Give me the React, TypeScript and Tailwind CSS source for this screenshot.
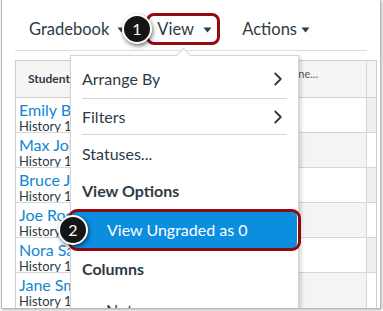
import React from 'react';
import { ChevronRight } from 'lucide-react';

const students = [
    { name: 'Emily Boyd', section: 'History 101' },
    { name: 'Max Johnson', section: 'History 101' },
    { name: 'Bruce Jones', section: 'History 101' },
    { name: 'Joe Rogers', section: 'History 101' },
    { name: 'Nora Santos', section: 'History 101' },
    { name: 'Jane Smith', section: 'History 101' },
];

const Caret = () => (
    <svg width="9" height="6" viewBox="0 0 9 6" className="inline-block">
        <path d="M0.5 0.5 L8.5 0.5 L4.5 5.5 Z" fill="#2d3b45" />
    </svg>
);

const Badge = ({ n, className }: { n: string; className: string }) => (
    <div
        className={`absolute w-[30px] h-[30px] rounded-full bg-[#151515] border-2 border-white shadow-[1px_2px_4px_rgba(0,0,0,0.55)] flex items-center justify-center text-white text-[16px] leading-none z-30 ${className}`}
    >
        {n}
    </div>
);

const App: React.FC = () => {
    return (
        <div className="w-[383px] h-[311px] bg-white font-['Lato','Liberation_Sans',sans-serif] text-[#2d3b45]">
            <div className="relative ml-px w-[380px] h-[309px] overflow-hidden bg-white border-x border-b border-[#b8b8b8] shadow-[1px_1px_3px_rgba(0,0,0,0.3)]">
                {/* top bar */}
                <div className="mx-[13px] h-[51px] pt-[8px] border-b border-[#dcdcdc] flex items-center pl-[14px] text-[16.5px]">
                    <span>Gradebook</span>
                    <span className="ml-[8px] mt-[1px] flex"><Caret /></span>
                    <div className="ml-[20px] h-[32px] w-[74px] border-[3px] border-[#960b0f] rounded-[8px] flex items-center pl-[8px]">
                        <span>View</span>
                        <span className="ml-[9px] mt-[1px] flex"><Caret /></span>
                    </div>
                    <span className="ml-[22px]">Actions</span>
                    <span className="ml-[4px] mt-[1px] flex"><Caret /></span>
                </div>
                <Badge n="1" className="left-[120px] top-[14px]" />

                {/* gradebook grid */}
                <div className="ml-[13px] mt-[9px] w-[362px] border border-[#cfcfcf]">
                    <div className="flex h-[37px] bg-[#f5f5f5] border-b border-[#cfcfcf]">
                        <div className="w-[185px] border-r border-[#d6d6d6] flex items-center pl-[12px] text-[12px] font-bold">
                            Student Name
                        </div>
                        <div className="w-[166px] border-r border-[#d6d6d6] pt-[6px] pr-[48px] flex justify-end text-[11px] leading-[13px] text-[#555]">
                            Unit 1 Outline...
                        </div>
                        <div className="flex-1" />
                    </div>
                    {students.map((s, i) => (
                        <div key={s.name} className={`flex h-[35px] ${i < students.length - 1 ? 'border-b border-[#d6d6d6]' : ''}`}>
                            <div className="w-[185px] border-r border-[#d6d6d6] pl-[3px] pt-[4px] overflow-hidden whitespace-nowrap">
                                <div className="text-[16px] leading-[16px] text-[#1286d3]">{s.name}</div>
                                <div className="text-[13px] leading-[14px] mt-[1px]">{s.section}</div>
                            </div>
                            <div className={`w-[166px] border-r border-[#d6d6d6] ${i % 2 === 1 ? 'bg-[#f4f4f4]' : 'bg-white'}`} />
                            <div className={`flex-1 ${i % 2 === 0 ? 'bg-[#efefef]' : 'bg-white'}`} />
                        </div>
                    ))}
                </div>

                {/* View menu */}
                <div className="absolute left-[68px] top-[55px] w-[229px] h-[270px] bg-white border border-[#d4d4d4] shadow-[2px_2px_4px_rgba(0,0,0,0.18)] z-10 text-[16px]">
                    <div className="absolute -top-[6px] left-[107px] w-[11px] h-[11px] rotate-45 bg-white border-l border-t border-[#d4d4d4]" />
                    <div className="relative pt-[3px]">
                        <div className="mx-[11px] h-[40px] border-b border-[#d6d6d6] flex items-center justify-between">
                            <span>Arrange By</span>
                            <ChevronRight size={22} strokeWidth={2} className="-mr-[2px]" />
                        </div>
                        <div className="mx-[11px] h-[36px] border-b border-[#d6d6d6] flex items-center justify-between">
                            <span>Filters</span>
                            <ChevronRight size={22} strokeWidth={2} className="-mr-[2px]" />
                        </div>
                        <div className="mx-[11px] h-[38px] flex items-center">Statuses...</div>
                        <div className="mx-[11px] h-[36px] flex items-center font-bold">View Options</div>
                        <div className="relative h-[42px] mx-px rounded-[8px] bg-[#0b8de0] flex items-center pl-[35px] text-white">
                            View Ungraded as 0
                            <div className="absolute -left-[4px] -right-[4px] top-0 bottom-0 border-[3px] border-[#8f0a0e] rounded-[9px]" />
                        </div>
                        <div className="mx-[11px] h-[35px] flex items-center font-bold">Columns</div>
                        <div className="ml-[35px] h-[48px] flex items-center">Notes</div>
                    </div>
                </div>
                <Badge n="2" className="left-[56px] top-[215px]" />
            </div>
        </div>
    );
};

export default App;
